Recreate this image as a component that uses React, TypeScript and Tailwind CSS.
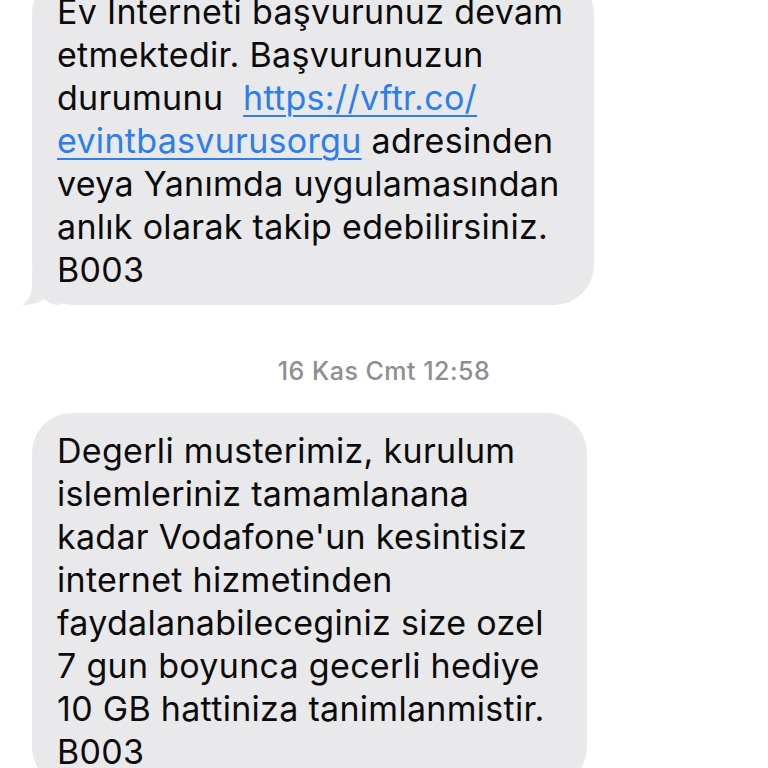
import React from "react";

const font = { fontFamily: "Inter, 'Noto Sans', 'Liberation Sans', sans-serif" };

function Line({ children }: { children: React.ReactNode }) {
  return <div className="whitespace-pre h-[43px] leading-[43px]">{children}</div>;
}

function Link({ children }: { children: React.ReactNode }) {
  return (
    <span className="text-[#2a7ef0] underline decoration-[2px] underline-offset-[5px]">{children}</span>
  );
}

export default function App() {
  return (
    <div
      className="w-[768px] h-[768px] overflow-hidden bg-white text-[#0b0b0b] text-[34px] tracking-[0.3px]"
      style={font}
    >
      <div className="pl-[32px] mt-[-26px]">
        <div className="relative w-[562px] rounded-[40px] bg-[#e9e9eb] pl-[25px] pt-[16px] pb-[14px]">
          <Line>Ev Interneti başvurunuz devam</Line>
          <Line>etmektedir. Başvurunuzun</Line>
          <Line>
            {"durumunu  "}
            <Link>https://vftr.co/</Link>
          </Line>
          <Line>
            <Link>evintbasvurusorgu</Link>
            {" adresinden"}
          </Line>
          <Line>veya Yanımda uygulamasından</Line>
          <Line>anlık olarak takip edebilirsiniz.</Line>
          <Line>B003</Line>
          <svg
            className="absolute left-[-12px] bottom-0"
            width="40"
            height="34"
            viewBox="0 0 40 34"
          >
            <path
              d="M12 0 L12 14 C12 24 8 30 2 34 C10 34 18 32 24 28 C28 32 34 34 40 34 L40 0 Z"
              fill="#e9e9eb"
            />
          </svg>
        </div>
      </div>
      <div className="mt-[51px] h-[30px] leading-[30px] text-center text-[25px] font-medium text-[#8e8e93] tracking-[0.5px]">
        16 Kas Cmt 12:58
      </div>
      <div className="pl-[32px] mt-[27px]">
        <div className="w-[555px] rounded-[40px] bg-[#e9e9eb] pl-[25px] pt-[16px] pb-[14px]">
          <Line>Degerli musterimiz, kurulum</Line>
          <Line>islemleriniz tamamlanana</Line>
          <Line>kadar Vodafone'un kesintisiz</Line>
          <Line>internet hizmetinden</Line>
          <Line>faydalanabileceginiz size ozel</Line>
          <Line>7 gun boyunca gecerli hediye</Line>
          <Line>10 GB hattiniza tanimlanmistir.</Line>
          <Line>B003</Line>
        </div>
      </div>
    </div>
  );
}
